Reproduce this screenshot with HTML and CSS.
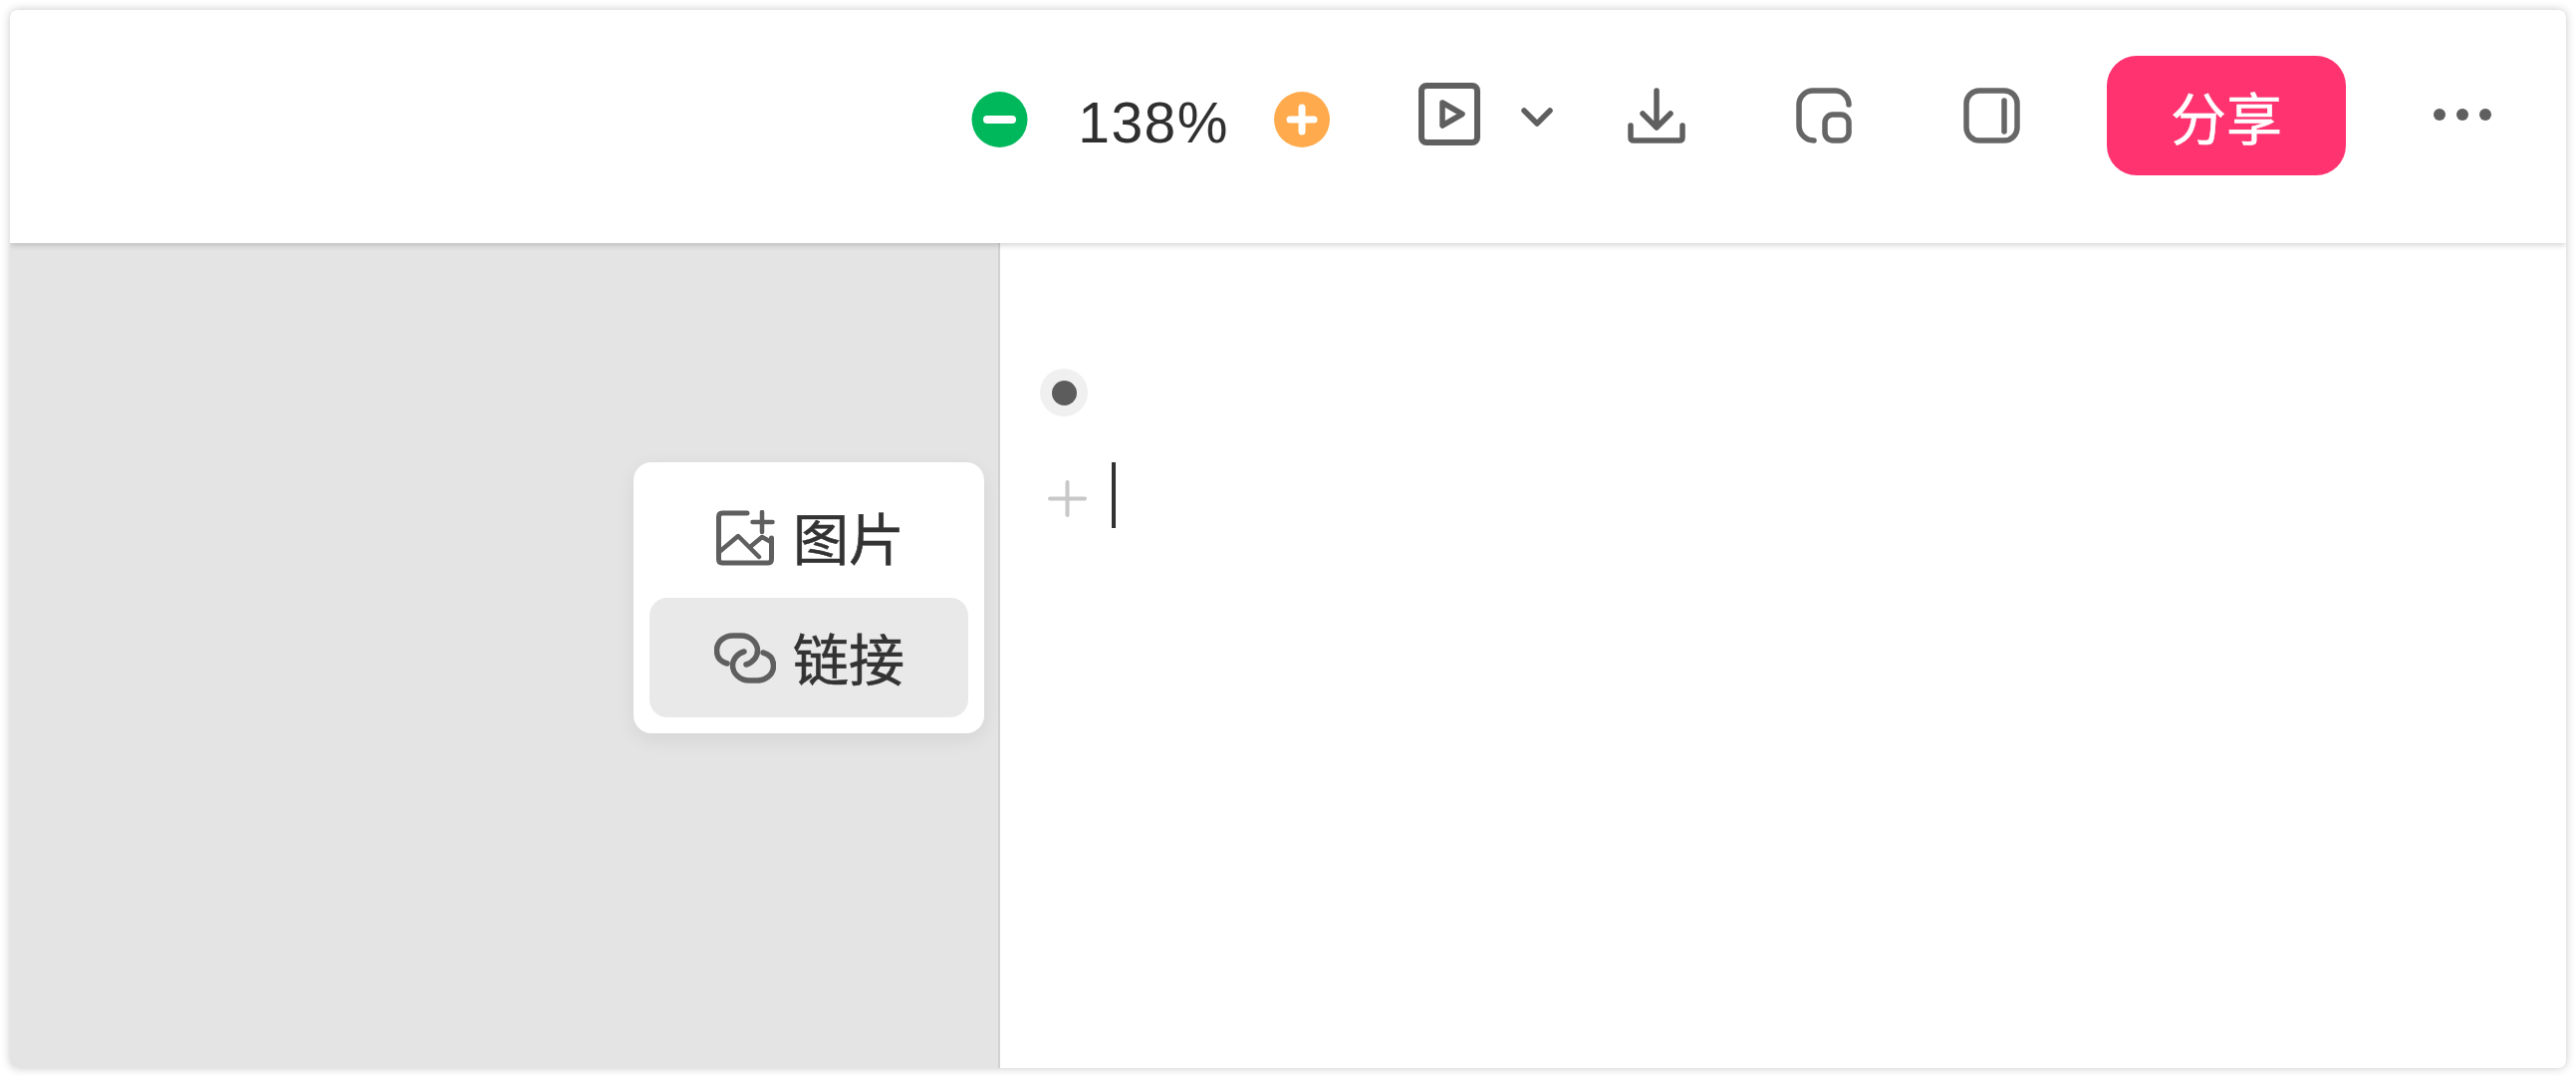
FILE: index.html
```html
<!DOCTYPE html>
<html lang="zh">
<head>
<meta charset="utf-8">
<title>编辑器</title>
<link rel="stylesheet" href="styles.css">
</head>
<body>
<div class="window">
  <header class="toolbar">
    <svg class="zoom-btn" width="57" height="56" viewBox="0 0 57 56"><circle cx="28.5" cy="28" r="28" fill="#00b85c"/><path d="M16 28H41" stroke="#fff" stroke-width="8" stroke-linecap="round"/></svg>
    <span class="zoom-value">138%</span>
    <svg class="zoom-plus" width="58" height="56" viewBox="0 0 58 56"><circle cx="29" cy="28" r="28" fill="#ffab4d"/><path d="M29 16V40M17 28H41" stroke="#fff" stroke-width="7" stroke-linecap="round"/></svg>
    <svg class="ic-play" width="62" height="63" viewBox="0 0 62 63" fill="none" stroke="#5f5f5f" stroke-width="6"><rect x="3" y="3" width="56" height="57" rx="5"/><path d="M24 20L44 31.500L24 43Z" stroke-width="5.500" stroke-linejoin="round"/></svg>
    <svg class="ic-chevron" width="32" height="19" viewBox="0 0 32 19" fill="none" stroke="#5f5f5f" stroke-width="5.500" stroke-linecap="round" stroke-linejoin="round"><path d="M3 3L16 16L29 3"/></svg>
    <svg class="ic-download" width="58" height="56" viewBox="0 0 58 56" fill="none" stroke="#5f5f5f" stroke-width="5.500" stroke-linecap="round" stroke-linejoin="round"><path d="M29 3V39M15 26L29 40L43 26"/><path d="M3 38V50Q3 53 6 53H52Q55 53 55 50V38"/></svg>
    <svg class="ic-float" width="56" height="56" viewBox="0 0 56 56" fill="none" stroke="#666" stroke-width="5.500" stroke-linecap="round"><path d="M18 53A15 15 0 0 1 3 38V17A14 14 0 0 1 17 3H39A14 14 0 0 1 53 17"/><rect x="29" y="27" width="24" height="26" rx="8"/></svg>
    <svg class="ic-panel" width="57" height="56" viewBox="0 0 57 56" fill="none" stroke="#666" stroke-width="5.500" stroke-linecap="round"><rect x="3" y="3" width="51" height="50" rx="13"/><path d="M41 13V44"/></svg>
    <button class="share" type="button">分享</button>
    <div class="more"><i></i><i></i><i></i></div>
  </header>
  <main class="body">
    <aside class="side">
      <div class="menu">
        <div class="menu-item">
          <svg width="62" height="56" viewBox="0 0 62 56" fill="none" stroke="#5f5f5f" stroke-width="5" stroke-linecap="round" stroke-linejoin="round"><path d="M34 3H9Q5.500 3 5.500 7V49Q5.500 53 9 53H55Q58.500 53 58.500 49V28"/><path d="M49 2V22M39.500 12H59.500" stroke-width="4.500"/><path d="M6 42L25 26L46 47M37 37L49 27L58 32" stroke-width="4.500"/></svg>
          <span>图片</span>
        </div>
        <div class="menu-item active">
          <svg class="link-icon" width="62" height="51" viewBox="0 0 62 51" fill="none" stroke="#5f5f5f" stroke-width="5.500" stroke-linecap="round"><path d="M13 31C6 29 2.500 24 2.500 18C2.500 9 10 3 19 3H27C36 3 43.500 10 43.500 18C43.500 24 39 30 32 32"/><path d="M49 20C56 22 59.500 27 59.500 33C59.500 42 52 48 43 48H35C26 48 18.500 41 18.500 33C18.500 27 23 21 30 19"/></svg>
          <span>链接</span>
        </div>
      </div>
    </aside>
    <section class="editor">
      <div class="dot"><i></i></div>
      <div class="line">
        <svg class="plus" width="39" height="37" viewBox="0 0 39 37" stroke="#c8c8c8" stroke-width="4" stroke-linecap="round"><path d="M19.500 2V35M2 18.500H37"/></svg>
        <span class="caret"></span>
      </div>
    </section>
  </main>
</div>
</body>
</html>
```
FILE: styles.css
```css
* { box-sizing: border-box; }
html, body { margin: 0; height: 100%; overflow: hidden; background: #fff; }
body { padding: 10px; font-family: "Liberation Sans", "Noto Sans CJK SC", sans-serif; color: #333; }
.window {
  height: 100%;
  display: flex;
  flex-direction: column;
  border-radius: 8px;
  overflow: hidden;
  background: #fff;
  box-shadow: 0 0 10px rgba(0, 0, 0, .22);
}
.toolbar {
  position: relative;
  z-index: 2;
  flex: 0 0 234px;
  display: flex;
  align-items: center;
  justify-content: flex-end;
  padding: 0 75px 14px 0;
  background: #fff;
  box-shadow: 0 2px 6px rgba(0, 0, 0, .18);
}
.toolbar svg { flex: none; display: block; }
.zoom-value { margin: 7px 0 0 50px; font-size: 57px; line-height: 1; letter-spacing: 1.5px; color: #2f2f2f; }
.zoom-plus { margin-left: 44px; }
.ic-play { margin: 0 0 11px 88px; }
.ic-chevron { margin: 0 0 5px 41px; }
.ic-download { margin: 0 0 8px 75px; }
.ic-float { margin: 0 0 9px 111px; }
.ic-panel { margin: 0 0 9px 112px; }
.share {
  width: 240px;
  height: 120px;
  margin: 0 0 8px 87px;
  border: 0;
  border-radius: 30px;
  background: #fe3370;
  color: #fff;
  font: 400 56px/1 "Noto Sans CJK SC", sans-serif;
  -webkit-text-stroke: .5px #fff;
}
.more { display: flex; gap: 11px; margin: 0 0 10px 88px; }
.more i { width: 12px; height: 12px; border-radius: 50%; background: #5f5f5f; }
.body { flex: 1; display: flex; min-height: 0; }
.side {
  position: relative;
  flex: 0 0 994px;
  background: #e4e4e4;
  border-right: 2px solid #d2d2d2;
}
.menu {
  position: absolute;
  left: 626px;
  top: 220px;
  width: 352px;
  padding: 16px;
  border-radius: 18px;
  background: #fff;
  box-shadow: 0 6px 20px rgba(0, 0, 0, .07);
}
.menu-item {
  display: flex;
  align-items: center;
  gap: 18px;
  height: 120px;
  padding-left: 64px;
  border-radius: 18px;
  font: 400 56px/1 "Noto Sans CJK SC", sans-serif;
  -webkit-text-stroke: .6px #333;
  color: #333;
}
.menu-item span { margin-top: -4px; }
.menu-item.active span { margin-top: -2px; }
.menu-item.active { background: #e9e9e9; }
.link-icon { margin-left: 1px; margin-right: -1px; }
.editor { flex: 1; padding: 126px 0 0 40px; }
.dot {
  display: flex;
  align-items: center;
  justify-content: center;
  width: 48px;
  height: 48px;
  border-radius: 50%;
  background: #f0f0f0;
}
.dot i { width: 25px; height: 25px; border-radius: 50%; background: #5c5c5c; }
.line { display: flex; align-items: center; gap: 25px; margin: 46px 0 0 8px; }
.plus { margin-top: 7px; }
.caret { width: 4px; height: 66px; background: #333; }
```
